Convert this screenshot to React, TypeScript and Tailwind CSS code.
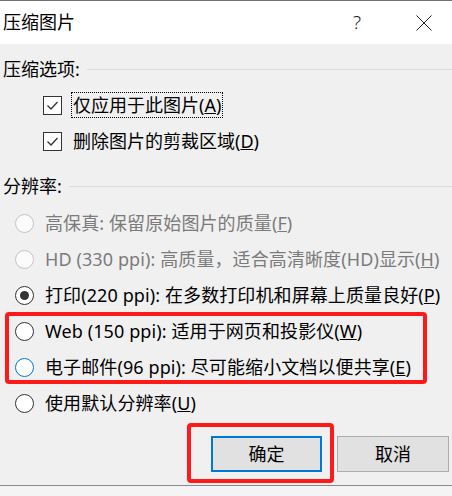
const font = "font-['Noto_Sans','Noto_Sans_CJK_SC',sans-serif]";

interface Opt {
    label: string;
    key: string;
    disabled?: boolean;
    checked?: boolean;
    focused?: boolean;
}

const Radio = ({ opt }: { opt: Opt }) => {
    let ring = "border-[#333333] bg-white";
    if (opt.disabled) ring = "border-[#c4c4c4] bg-[#fbfbfb]";
    if (opt.focused) ring = "border-[#0078d7] bg-white";

    return (
        <div className="h-[36px] flex items-center pl-[15px]">
            <div className={"w-[19px] h-[19px] rounded-full border flex items-center justify-center " + ring}>
                {opt.checked && <div className="w-[9px] h-[9px] rounded-full bg-[#333333]" />}
            </div>
            <div className={"ml-[11px] whitespace-nowrap tracking-[0.1px] " + (opt.disabled ? "text-[#7b7b7b]" : "text-black")}>
                {opt.label}(<span className="underline underline-offset-[1px]">{opt.key}</span>)
            </div>
        </div>
    );
};

const Check = ({ text, k, focus }: { text: string; k: string; focus?: boolean }) => (
    <div className="h-[26px] flex items-center pl-[43px]">
        <div className="w-[19px] h-[19px] border border-[#333333] bg-white flex items-center justify-center">
            <svg width="17" height="17" viewBox="0 0 17 17">
                <polyline points="3.5,8.5 7,12 13.5,5" fill="none" stroke="#333333" strokeWidth="1.3" />
            </svg>
        </div>
        <div className={"ml-[9px] h-[26px] px-[1px] flex items-center whitespace-nowrap border border-dotted " + (focus ? "border-black" : "border-transparent")}>
            {text}(<span className="underline underline-offset-[1px]">{k}</span>)
        </div>
    </div>
);

const Section = ({ title }: { title: string }) => (
    <div className="h-[24px] flex items-center pl-[3px]">
        <div className="whitespace-nowrap">{title}</div>
        <div className="flex-1 h-px bg-[#dadada] ml-[7px]" />
    </div>
);

const options: Opt[] = [
    { label: "高保真: 保留原始图片的质量", key: "F", disabled: true },
    { label: "HD (330 ppi): 高质量，适合高清晰度(HD)显示", key: "H", disabled: true },
    { label: "打印(220 ppi): 在多数打印机和屏幕上质量良好", key: "P", checked: true },
    { label: "Web (150 ppi): 适用于网页和投影仪", key: "W" },
    { label: "电子邮件(96 ppi): 尽可能缩小文档以便共享", key: "E", focused: true },
    { label: "使用默认分辨率", key: "U" },
];

export default function App() {
    return (
        <div className={"w-[452px] h-[496px] bg-[#f4f4f4] overflow-hidden text-[18px] text-black " + font}>
            <div className="h-[486px] bg-[#f0f0f0] border-b border-[#8a8a8a] flex flex-col">

                <div className="h-[44px] bg-white border-t border-[#6f6f6f] flex items-center pl-[3px]">
                    <div className="whitespace-nowrap">压缩图片</div>
                    <div className="ml-auto mr-[55px] text-[19px] font-light text-[#222]">?</div>
                    <svg className="mr-[20px]" width="16" height="16" viewBox="0 0 16 16">
                        <path d="M0.5 0.5 L15.5 15.5 M15.5 0.5 L0.5 15.5" stroke="#222" strokeWidth="1" />
                    </svg>
                </div>

                <div className="mt-[13px]">
                    <Section title="压缩选项:" />
                </div>
                <div className="mt-[11px]">
                    <Check text="仅应用于此图片" k="A" focus />
                </div>
                <div className="mt-[10px]">
                    <Check text="删除图片的剪裁区域" k="D" />
                </div>

                <div className="mt-[20px]">
                    <Section title="分辨率:" />
                </div>

                <div className="mt-[7px]">
                    {options.slice(0, 3).map((o) => <Radio key={o.key} opt={o} />)}
                    <div className="relative">
                        {options.slice(3, 5).map((o) => <Radio key={o.key} opt={o} />)}
                        <div className="absolute left-[5px] top-[-1px] w-[422px] h-[72px] border-4 border-[#ff1a1a] rounded-[4px]" />
                    </div>
                    <Radio opt={options[5]} />
                </div>

                <div className="mt-[15px] flex justify-end gap-[15px] pr-[3px]">
                    <div className="relative">
                        <div className="w-[111px] h-[36px] bg-[#e1e1e1] border-2 border-[#0078d7] flex items-center justify-center">确定</div>
                        <div className="absolute left-[-24px] top-[-13px] w-[147px] h-[60px] border-4 border-[#ff1a1a] rounded-[4px]" />
                    </div>
                    <div className="w-[112px] h-[36px] bg-[#e1e1e1] border border-[#adadad] flex items-center justify-center">取消</div>
                </div>

            </div>
        </div>
    );
}
